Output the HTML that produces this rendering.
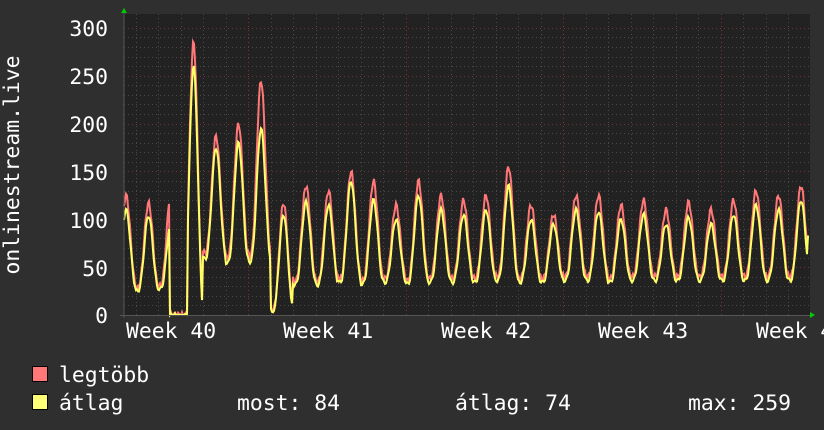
<!DOCTYPE html>
<html><head><meta charset="utf-8"><style>
html,body{margin:0;padding:0;background:#2f2f2f;width:824px;height:430px;overflow:hidden}
svg{display:block}
text{font-family:"DejaVu Sans Mono","Liberation Mono",monospace;fill:#fff}
</style></head><body>
<svg id="s" width="824" height="430" xmlns="http://www.w3.org/2000/svg">
<rect width="824" height="430" fill="#2f2f2f"/>
<rect x="124" y="14" width="686" height="301" fill="#222"/>
<g id="grid"></g>
<polyline id="mx" fill="none" stroke="#ff7777" stroke-width="2"/>
<polyline id="av" fill="none" stroke="#ffff66" stroke-width="2"/>
<line x1="124" y1="10" x2="124" y2="318" stroke="#555" stroke-width="1"/>
<line x1="120" y1="315.5" x2="812" y2="315.5" stroke="#555" stroke-width="1"/>
<polygon points="121,13 127,13 124,8" fill="#00cc00"/>
<polygon points="810,312 810,318 815,315" fill="#00cc00"/>
<g font-size="21.4" text-anchor="end">
<text x="108" y="36">300</text>
<text x="108" y="84">250</text>
<text x="108" y="132">200</text>
<text x="108" y="180">150</text>
<text x="108" y="228">100</text>
<text x="108" y="276">50</text>
<text x="108" y="323">0</text>
</g>
<g font-size="21.4">
<text x="126" y="338">Week 40</text>
<text x="283" y="338">Week 41</text>
<text x="441" y="338">Week 42</text>
<text x="598" y="338">Week 43</text>
<text x="756" y="338">Week 44</text>
</g>
<text font-size="21.4" transform="translate(19,165) rotate(-90)" text-anchor="middle">onlinestream.live</text>
<rect x="32.5" y="366.5" width="15" height="15" fill="#ff7777" stroke="#000"/>
<rect x="32.5" y="394.5" width="15" height="15" fill="#ffff77" stroke="#000"/>
<g font-size="21.4">
<text x="59" y="382">legtöbb</text>
<text x="59" y="410">átlag</text>
<text x="237" y="410">most: 84</text>
<text x="455" y="410">átlag: 74</text>
<text x="688" y="410">max: 259</text>
</g>
</svg>
<script>
var g=document.getElementById('grid'),h='';
function Y(v){return 315-v*0.957;}
for(var v=10;v<=300;v+=10){var y=Math.round(Y(v))+0.5;var red=v%50==0;
h+='<line x1="124" x2="810" y1="'+y+'" y2="'+y+'" stroke="'+(red?'#7a3535':'#4a4a4a')+'" stroke-dasharray="1,3"/>';}
for(var i=0;i<32;i++){var x=Math.round(113+22.5*i)+0.5;if(x<125||x>810)continue;var red=((i-6)%7==0);
h+='<line y1="14" y2="315" x1="'+x+'" x2="'+x+'" stroke="'+(red?'#7a3535':'#4a4a4a')+'" stroke-dasharray="1,3"/>';}
g.innerHTML=h;
var P=[[125,110],[117,104],[130,98],[285,260],[187,175],[200,180],[245,195],[117,105],
[135,118],[130,115],[150,140],[140,120],[115,100],[140,125],[125,110],[120,105],[125,110],[155,135],
[115,100],[105,95],[125,110],[125,108],[115,100],[120,105],[110,95],[118,102],[110,95],[120,105],[130,115],[125,110],[135,120],[120,105]];
var T=[30,28,30,0,65,60,62,5,35,35,38,36,38,36,38,38,38,40,38,38,40,40,38,40,40,40,40,40,40,40,40,40];
var a='',b='';
for(var x=124;x<=808;x++){var t=(x-113)/22.5,d=Math.floor(t),p=t-d;
var f=Math.pow((1-Math.cos(2*Math.PI*(p-0.08)))/2,1.4);
var tr=T[d]!==undefined?T[d]:40;var pk=P[d]||[120,105];
if(d==4&&p<0.3)tr=65;
var m=tr+(pk[0]-tr)*f,av=tr*0.9+(pk[1]-tr*0.9)*f;
if(d==2&&p>0.5){m=tr+(pk[0]-tr)*Math.sin(Math.PI*(p-0.5)/0.5*0.95);av=m*0.75;if(p>0.78){m=0;av=0;}}
if(x>=170&&x<=187){m=0;av=0;}
if(x==808){m=85;av=82;}
m+=Math.sin(x*1.7)*3;av+=Math.sin(x*1.3)*2;
if(m<0)m=0;if(av<0)av=0;if(av>m)av=m;
a+=x+','+Y(m).toFixed(1)+' ';b+=x+','+Y(av).toFixed(1)+' ';}
document.getElementById('mx').setAttribute('points',a);
document.getElementById('av').setAttribute('points',b);
</script>
</body></html>
